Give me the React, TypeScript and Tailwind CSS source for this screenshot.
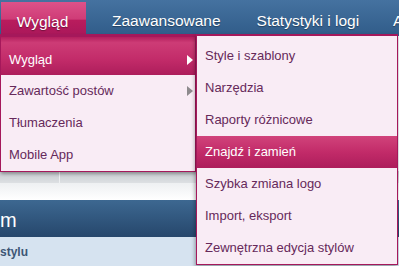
const mainItems = [
  { label: 'Wygląd', active: true, sub: true },
  { label: 'Zawartość postów', active: false, sub: true },
  { label: 'Tłumaczenia', active: false, sub: false },
  { label: 'Mobile App', active: false, sub: false },
]

const subItems = [
  'Style i szablony',
  'Narzędzia',
  'Raporty różnicowe',
  'Znajdź i zamień',
  'Szybka zmiana logo',
  'Import, eksport',
  'Zewnętrzna edycja stylów',
]

export default function App() {
  return (
    <div className="relative h-[266px] w-[399px] overflow-hidden bg-white font-['Liberation_Sans',Arial,sans-serif]">
      {/* Top navigation */}
      <nav className="flex h-[36px] items-start whitespace-nowrap bg-gradient-to-b from-[#4572a0] to-[#305c89] text-[15.5px] text-white [text-shadow:0_1px_1px_rgba(0,0,0,0.35)]">
        <div className="ml-px mt-[2px] flex h-[34px] w-[85px] shrink-0 items-center justify-center pt-[5px] pr-[2px] bg-[linear-gradient(to_bottom,#dc5289_0%,#cf3c77_50%,#b91c5d_54%,#a9175a_100%)]">
          Wygląd
        </div>
        <div className="ml-[26px] flex h-[36px] shrink-0 items-center pt-[6px]">Zaawansowane</div>
        <div className="ml-[36px] flex h-[36px] shrink-0 items-center pt-[6px]">Statystyki i logi</div>
        <div className="ml-[34px] flex h-[36px] shrink-0 items-center pt-[6px]">A</div>
      </nav>

      {/* Page content behind the menus */}
      <div className="h-[135px] bg-[#eef0f3]" />
      <div className="flex h-[12px] bg-gradient-to-b from-[#c5c9ce] to-[#dde0e3]">
        <div className="w-[60px] border-r border-[#eef0f2]" />
        <div className="flex-1" />
      </div>
      <div className="h-[17px] bg-gradient-to-b from-[#eef0f2] to-white" />
      <div className="flex h-[37px] items-center bg-gradient-to-b from-[#3d6891] to-[#26476c] pt-[2px] text-[20px] text-white">
        <span>m</span>
      </div>
      <div className="flex h-[29px] items-center bg-[#d6e3f0] text-[12px] font-bold text-[#3d5675]">
        <span>stylu</span>
      </div>

      {/* First dropdown */}
      <div className="absolute left-0 top-[34px] w-[196px] border border-t-[3px] border-[#a5185b] bg-[#f9ecf5] shadow-[1px_2px_3px_rgba(0,0,0,0.3)]">
        {mainItems.map((item) => (
          <div
            key={item.label}
            className={
              item.active
                ? 'flex h-[38px] items-center justify-between pl-[8px] pr-[2px] pt-[7px] text-[13px] text-white bg-[linear-gradient(to_bottom,#b41f5e_0%,#cd3c76_15%,#c22b69_60%,#ad1d5b_100%)]'
                : 'flex h-[32px] items-center justify-between pl-[8px] pr-[2px] text-[13px] text-[#66295a]'
            }
          >
            <span>{item.label}</span>
            {item.sub && (
              <span
                className={
                  item.active
                    ? 'h-0 w-0 border-y-[5px] border-l-[6px] border-y-transparent border-l-white'
                    : 'h-0 w-0 border-y-[5px] border-l-[6px] border-y-transparent border-l-[#8e8a8d]'
                }
              />
            )}
          </div>
        ))}
      </div>

      {/* Second dropdown */}
      <div className="absolute left-[196px] top-[34px] w-[202px] border border-t-2 border-[#a5185b] bg-[#f9ecf5] pt-[4px] shadow-[-1px_2px_4px_rgba(0,0,0,0.35)]">
        {subItems.map((label) => (
          <div
            key={label}
            className={
              label === 'Znajdź i zamień'
                ? 'flex h-[32px] items-center pl-[8px] text-[13px] text-white bg-[linear-gradient(to_bottom,#d1437b_0%,#c22b69_50%,#ad1d5b_100%)]'
                : 'flex h-[32px] items-center pl-[8px] text-[13px] text-[#66295a]'
            }
          >
            {label}
          </div>
        ))}
      </div>
    </div>
  )
}
